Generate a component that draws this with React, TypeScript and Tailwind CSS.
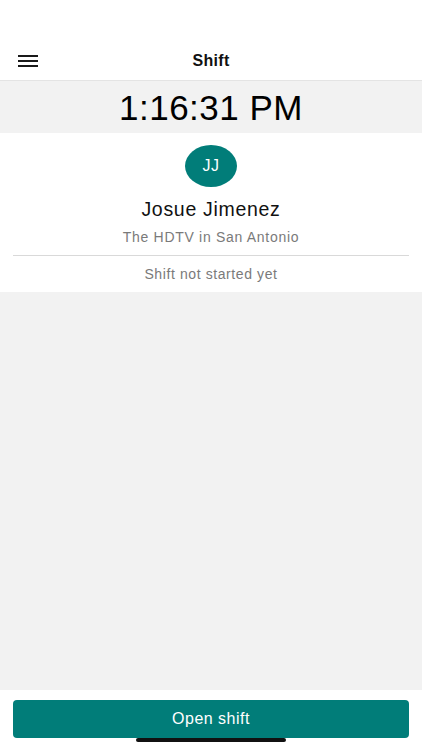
export default function App() {
  return (
    <div className="flex h-[750px] w-[422px] flex-col bg-[#f2f2f2] font-['Liberation_Sans','Arial',sans-serif]">
      <header className="relative flex h-[81px] shrink-0 items-end justify-center border-b border-[#e4e4e4] bg-white pb-[7px]">
        <button type="button" className="absolute left-[18px] top-[55px] flex w-[20px] flex-col gap-[3px]">
          <span className="h-[2px] w-full bg-[#1a1a1a]" />
          <span className="h-[2px] w-full bg-[#1a1a1a]" />
          <span className="h-[2px] w-full bg-[#1a1a1a]" />
        </button>
        <h1 className="text-[16px] font-bold tracking-[0.3px] text-[#111]">Shift</h1>
      </header>

      <div className="flex h-[52px] shrink-0 items-center justify-center bg-[#f2f2f2]">
        <p className="text-[35px] leading-none tracking-[0.5px] text-black">1:16:31 PM</p>
      </div>

      <section className="flex shrink-0 flex-col items-center bg-white pt-[12px]">
        <div className="flex h-[42px] w-[52px] items-center justify-center rounded-[50%] bg-[#017d79] text-[16px] tracking-[0.5px] text-white">
          JJ
        </div>
        <p className="mt-[9px] text-[19.5px] leading-[26px] tracking-[0.7px] text-[#111]">Josue Jimenez</p>
        <p className="mt-[5px] text-[14px] leading-[20px] tracking-[0.7px] text-[#7a7a7a]">The HDTV in San Antonio</p>
        <div className="mt-[8px] h-px w-[396px] bg-[#d9d9d9]" />
        <p className="py-[8px] text-[14px] leading-[20px] tracking-[0.6px] text-[#7a7a7a]">Shift not started yet</p>
      </section>

      <div className="flex-1" />

      <footer className="relative flex h-[60px] shrink-0 justify-center bg-white pt-[10px]">
        <button
          type="button"
          className="h-[38px] w-[396px] rounded-[4px] bg-[#017d79] text-[16px] tracking-[0.5px] text-white"
        >
          Open shift
        </button>
        <div className="absolute bottom-[8px] left-[136px] h-[4px] w-[150px] rounded-full bg-[#111]" />
      </footer>
    </div>
  )
}
